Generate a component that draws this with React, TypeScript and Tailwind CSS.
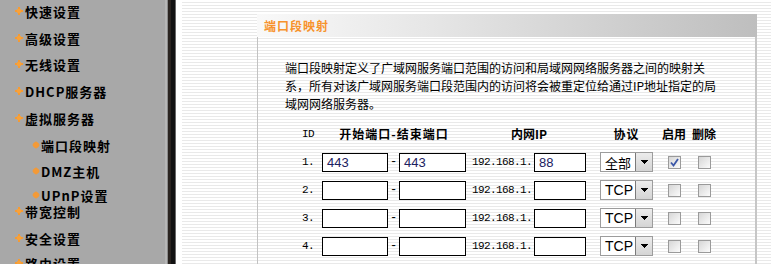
import React from "react";

const CJK = { fontFamily: '"Noto Sans CJK SC", "Noto Sans", sans-serif' };
const MONO = { fontFamily: '"Liberation Mono", "DejaVu Sans Mono", monospace' };
const ARIAL = { fontFamily: '"Liberation Sans", Arial, sans-serif' };

function PlusBullet() {
  return (
    <svg width="8" height="8" viewBox="0 0 8 8" className="shrink-0" shapeRendering="crispEdges">
      <path d="M3 0h2v3h3v2H5v3H3V5H0V3h3z" fill="#f59b34" />
      <path d="M2 2h4v4H2z" fill="#f7a23c" />
    </svg>
  );
}

function DotBullet() {
  return <div className="w-[6px] h-[6px] rotate-45 rounded-[2px] bg-[#f39a38] shrink-0" />;
}

const menu: { label: string; sub?: boolean; mt: string }[] = [
  { label: "快速设置", mt: "mt-[3px]" },
  { label: "高级设置", mt: "mt-[11px]" },
  { label: "无线设置", mt: "mt-[10px]" },
  { label: "DHCP服务器", mt: "mt-[11px]" },
  { label: "虚拟服务器", mt: "mt-[11px]" },
  { label: "端口段映射", sub: true, mt: "mt-[11px]" },
  { label: "DMZ主机", sub: true, mt: "mt-[10px]" },
  { label: "UPnP设置", sub: true, mt: "mt-[8px]" },
  { label: "带宽控制", mt: "mt-[0px]" },
  { label: "安全设置", mt: "mt-[11px]" },
  { label: "路由设置", mt: "mt-[9px]" },
];

function Box({ w, value }: { w: string; value?: string }) {
  return (
    <div
      className={`${w} h-[19px] border border-black bg-white flex items-center pl-[4px] text-[13px] text-[#1b2160] leading-none`}
      style={ARIAL}
    >
      {value}
    </div>
  );
}

function Select({ value }: { value: string }) {
  const cjk = value === "全部";
  return (
    <div className="w-[53px] h-[20px] border border-[#9c9c9c] bg-white flex items-stretch">
      <div
        className="flex-1 flex items-center pl-[4px] text-[14px] text-black leading-none"
        style={cjk ? { ...CJK, fontSize: "13px" } : ARIAL}
      >
        {value}
      </div>
      <div className="w-[17px] border-l border-[#7a7a7a] bg-[linear-gradient(#ececec,#d4d4d4)] flex items-center justify-center">
        <svg width="7" height="4" viewBox="0 0 7 4" shapeRendering="crispEdges">
          <path d="M0 0h7L3.5 4z" fill="#000" />
        </svg>
      </div>
    </div>
  );
}

function Check({ checked }: { checked?: boolean }) {
  return (
    <div className="w-[13px] h-[13px] border border-[#9a9a9a] bg-[linear-gradient(135deg,#d6d6d6,#fbfbfb)] flex items-center justify-center">
      {checked && (
        <svg width="9" height="9" viewBox="0 0 9 9">
          <path d="M1 4.5 L3.5 7.5 L8 1" stroke="#3b57a8" strokeWidth="1.8" fill="none" />
        </svg>
      )}
    </div>
  );
}

const rows = [
  { id: "1.", a: "443", b: "443", ip: "88", proto: "全部", en: true },
  { id: "2.", a: "", b: "", ip: "", proto: "TCP", en: false },
  { id: "3.", a: "", b: "", ip: "", proto: "TCP", en: false },
  { id: "4.", a: "", b: "", ip: "", proto: "TCP", en: false },
];

export default function App() {
  return (
    <div className="w-[771px] h-[264px] overflow-hidden flex bg-white">
      <div className="w-[165px] h-full bg-[#a8a8a8] flex flex-col shrink-0 overflow-hidden" style={CJK}>
        {menu.map((m) => (
          <div
            key={m.label}
            className={`${m.mt} h-[16px] shrink-0 flex items-center gap-[2px] ${m.sub ? "pl-[33px]" : "pl-[15px]"} text-[13px] font-bold tracking-[1px] text-black leading-none whitespace-nowrap`}
          >
            {m.sub ? <DotBullet /> : <PlusBullet />}
            <span>{m.label}</span>
          </div>
        ))}
      </div>
      <div className="w-[11px] h-full shrink-0 bg-[linear-gradient(to_right,#b6b6b6_0px,#b6b6b6_2px,#8a8a8a_2px,#8a8a8a_3px,#2a2420_3px,#2a2420_6px,#121212_6px,#121212_10px,#6a6a6a_10px,#6a6a6a_11px)]" />
      <div className="w-[6px] h-full bg-white shrink-0" />
      <div className="flex-1 h-full bg-[repeating-linear-gradient(to_bottom,#ffffff_0px,#ffffff_2px,#e9e9e9_2px,#e9e9e9_3px)] pl-[75px] pt-[14px]">
        <div className="w-[500px] h-full flex flex-col">
          <div className="h-[23px] bg-[linear-gradient(to_right,#f9f9f9,#e6e6e6_35%,#bebebe)] flex items-center pl-[7px]">
            <span className="text-[12px] font-bold tracking-[1px] text-[#f7922c] leading-none" style={CJK}>
              端口段映射
            </span>
          </div>
          <div className="flex-1 border-l border-[#c2c2c2] border-r-2 border-r-[#c6c6c6]">
            <div className="pl-[27px] pt-[22px] text-[12px] leading-[18px] text-black whitespace-nowrap" style={CJK}>
              端口段映射定义了广域网服务端口范围的访问和局域网网络服务器之间的映射关
              <br />
              系，所有对该广域网服务端口段范围内的访问将会被重定位给通过IP地址指定的局
              <br />
              域网网络服务器。
            </div>
            <div className="pl-[44px] mt-[7px]">
              <div className="flex items-center h-[28px] text-black">
                <div className="w-[20px] text-[11px] tracking-[-0.6px]" style={MONO}>ID</div>
                <div className="w-[144px] text-center text-[12px] font-bold tracking-[1px]" style={CJK}>开始端口-结束端口</div>
                <div className="w-[6px]" />
                <div className="w-[114px] text-center text-[12px] font-bold" style={CJK}>内网IP</div>
                <div className="w-[14px]" />
                <div className="w-[53px] text-center text-[12px] font-bold tracking-[1px]" style={CJK}>协议</div>
                <div className="w-[6px]" />
                <div className="w-[30px] text-center text-[12px] font-bold whitespace-nowrap" style={CJK}>启用</div>
                <div className="w-[30px] text-center text-[12px] font-bold whitespace-nowrap" style={CJK}>删除</div>
              </div>
              {rows.map((r) => (
                <div key={r.id} className="flex items-center h-[28px] text-black">
                  <div className="w-[20px] text-[11px] tracking-[-0.6px]" style={MONO}>{r.id}</div>
                  <Box w="w-[66px]" value={r.a} />
                  <div className="w-[11px] text-center text-[12px]" style={MONO}>-</div>
                  <Box w="w-[67px]" value={r.b} />
                  <div className="w-[6px]" />
                  <div className="w-[62px] text-[11px] tracking-[-0.6px] whitespace-nowrap" style={MONO}>192.168.1.</div>
                  <Box w="w-[52px]" value={r.ip} />
                  <div className="w-[14px]" />
                  <Select value={r.proto} />
                  <div className="w-[6px]" />
                  <div className="w-[30px] flex justify-center">
                    <Check checked={r.en} />
                  </div>
                  <div className="w-[30px] flex justify-center">
                    <Check />
                  </div>
                </div>
              ))}
            </div>
          </div>
        </div>
      </div>
    </div>
  );
}
